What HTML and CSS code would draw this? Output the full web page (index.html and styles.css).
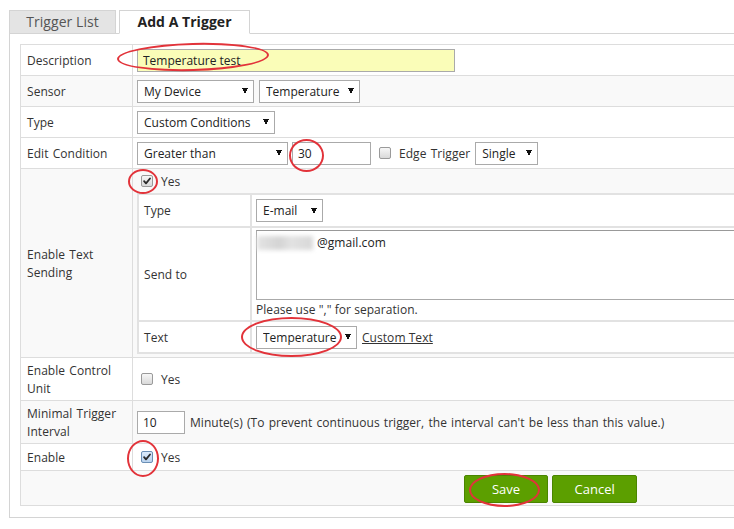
FILE: index.html
```html
<!DOCTYPE html>
<html lang="en">
<head>
    <meta charset="UTF-8">
    <meta name="viewport" content="width=device-width, initial-scale=1.0">
    <title>Add A Trigger</title>
    <link rel="stylesheet" href="styles.css">
</head>
<body>
<div class="page">
    <div class="tabs">
        <div class="tab">Trigger List</div>
        <div class="tab active">Add A Trigger</div>
    </div>

    <div class="panel">
        <table class="form">
            <tr class="r31">
                <td class="label">Description</td>
                <td class="value"><input class="desc" type="text" value="Temperature test"></td>
            </tr>
            <tr class="r31 alt">
                <td class="label">Sensor</td>
                <td class="value">
                    <div class="line">
                        <select class="w117"><option>My Device</option></select>
                        <select class="w101"><option>Temperature</option></select>
                    </div>
                </td>
            </tr>
            <tr class="r31">
                <td class="label">Type</td>
                <td class="value"><select class="w138"><option>Custom Conditions</option></select></td>
            </tr>
            <tr class="r31">
                <td class="label">Edit Condition</td>
                <td class="value">
                    <div class="line">
                        <select class="w151"><option>Greater than</option></select>
                        <input class="num w79" type="text" value="30">
                        <span class="cb edge"></span>
                        <span>Edge Trigger</span>
                        <select class="w63"><option>Single</option></select>
                    </div>
                </td>
            </tr>
            <tr class="alt">
                <td class="label">Enable Text<br>Sending</td>
                <td class="value nest">
                    <div class="line yes-line">
                        <span class="cb checked"><svg viewBox="0 0 12 12"><path d="M2.5 6.2 L4.8 8.8 L9.6 3" /></svg></span>
                        <span>Yes</span>
                    </div>
                    <table class="sub">
                        <tr class="s-type">
                            <td class="label">Type</td>
                            <td class="value"><select class="w67"><option>E-mail</option></select></td>
                        </tr>
                        <tr class="s-send">
                            <td class="label">Send to</td>
                            <td class="value send">
                                <div class="mailbox"><span class="blur"></span>@gmail.com</div>
                                <div class="note">Please use "," for separation.</div>
                            </td>
                        </tr>
                        <tr class="s-text">
                            <td class="label">Text</td>
                            <td class="value">
                                <div class="line">
                                    <select class="w101"><option>Temperature</option></select>
                                    <a class="link" href="#">Custom Text</a>
                                </div>
                            </td>
                        </tr>
                    </table>
                </td>
            </tr>
            <tr class="r43">
                <td class="label">Enable Control<br>Unit</td>
                <td class="value">
                    <div class="line"><span class="cb"></span><span>Yes</span></div>
                </td>
            </tr>
            <tr class="r43 alt">
                <td class="label">Minimal Trigger<br>Interval</td>
                <td class="value">
                    <div class="line">
                        <input class="num w48" type="text" value="10">
                        <span>Minute(s) (To prevent continuous trigger, the interval can't be less than this value.)</span>
                    </div>
                </td>
            </tr>
            <tr class="r27">
                <td class="label">Enable</td>
                <td class="value">
                    <div class="line">
                        <span class="cb checked focus"><svg viewBox="0 0 12 12"><path d="M2.5 6.2 L4.8 8.8 L9.6 3" /></svg></span>
                        <span>Yes</span>
                    </div>
                </td>
            </tr>
            <tr class="r35 alt">
                <td colspan="2" class="actions">
                    <button class="btn">Save</button>
                    <button class="btn">Cancel</button>
                </td>
            </tr>
        </table>
    </div>

    <!-- red annotation marks -->
    <div class="mark m1"></div>
    <div class="mark m2"></div>
    <div class="mark m3"></div>
    <div class="mark m4"></div>
    <div class="mark m5"></div>
    <div class="mark m6"></div>
</div>
</body>
</html>
```

FILE: styles.css
```css
* {
    margin: 0;
    padding: 0;
    box-sizing: border-box;
}

html, body {
    overflow: hidden;
}

body {
    font-family: "Open Sans", "Noto Sans", sans-serif;
    font-size: 12px;
    color: #333;
    background: #fff;
    word-spacing: 1px;
    letter-spacing: 0.05px;
}

.page {
    position: relative;
    width: 1100px;
    padding: 10px 0 0 9px;
}

/* tabs */
.tabs {
    display: flex;
    gap: 3px;
    margin-bottom: -1px;
}

.tab {
    height: 24px;
    line-height: 22px;
    font-size: 14px;
    color: #555;
    background: #e4e4e4;
    border: 1px solid #d4d4d4;
    width: 107px;
    text-align: center;
    word-spacing: 0;
}

.tab.active {
    width: 131px;
    background: #fff;
    color: #222;
    font-weight: bold;
    border-bottom-color: #fff;
    position: relative;
}

.panel {
    border: 1px solid #d4d4d4;
    padding: 10px 10px 11px 10px;
}

/* main table */
.form {
    width: 1062px;
    border-collapse: collapse;
    border: 1px solid #ddd;
}

.form td {
    border: 1px solid #ddd;
    vertical-align: middle;
}

.form .label {
    width: 112px;
    padding: 2px 6px 0;
    line-height: 18px;
}

.form .value {
    padding: 0 4px;
}

.alt td {
    background: #f9f9f9;
}

.r31 { height: 31px; }
.r43 { height: 43px; }
.r27 { height: 27px; }
.r35 { height: 35px; }

.line {
    display: flex;
    align-items: center;
    gap: 5px;
}

/* controls */
select {
    appearance: none;
    -webkit-appearance: none;
    height: 23px;
    font-family: inherit;
    font-size: 12px;
    color: #222;
    border: 1px solid #aaa;
    padding: 0 16px 0 6px;
    background-color: #fff;
    background-image:
        linear-gradient(to bottom left, #111 50%, transparent 50%),
        linear-gradient(to bottom right, #111 50%, transparent 50%);
    background-size: 3px 6px, 3px 6px;
    background-position: calc(100% - 8px) 50%, calc(100% - 5px) 50%;
    background-repeat: no-repeat;
    border-radius: 0;
}

.w117 { width: 117px; }
.w101 { width: 101px; }
.w138 { width: 138px; }
.w151 { width: 151px; }
.w63 { width: 63px; }
.w67 { width: 67px; }

input[type="text"] {
    font-family: inherit;
    font-size: 12px;
    color: #222;
    height: 23px;
    padding: 0 5px;
    border: 1px solid #aaa;
    outline: none;
}

.desc {
    width: 318px;
    background: #fafdb8;
    border-color: #8e8e8e #ededed #ededed #8e8e8e;
    border-top-width: 2px;
    padding-left: 4px;
}

.w79 { width: 79px; margin-left: -1px; }
.w48 { width: 48px; }

.num {
    padding-left: 4px;
}

.cb {
    display: inline-block;
    width: 12px;
    height: 12px;
    margin-left: 4px;
    border: 1px solid #9a9a9a;
    border-radius: 2px;
    background: linear-gradient(#f7f7f7, #d9d9d9);
    flex: none;
}

.cb + span {
    margin-left: 3px;
}

.cb.edge {
    margin-left: 3px;
}

.cb svg {
    display: block;
    width: 10px;
    height: 10px;
}

.cb path {
    fill: none;
    stroke: #2a2a2a;
    stroke-width: 2.2;
    stroke-linecap: round;
    stroke-linejoin: round;
}

.cb.focus {
    border-color: #6b8fb5;
    background: linear-gradient(#dcebfb, #b9d3ef);
}

/* nested table for text sending */
.nest {
    padding: 0 0 3px 4px !important;
}

.yes-line {
    height: 24px;
}

.sub {
    width: 700px;
    border-collapse: collapse;
    border: 2px solid #e2e2e2;
    background: #fff;
    word-spacing: 0;
}

.sub td {
    border: 2px solid #e2e2e2;
    background: #fff;
}

.sub .label {
    width: 113px;
    padding: 1px 5px 0;
}

.sub .value {
    padding: 0 4px;
}

.s-type { height: 33px; }
.s-text { height: 32px; }

.send {
    padding-top: 2px !important;
}

.mailbox {
    width: 560px;
    height: 70px;
    border: 1px solid #aaa;
    border-top-color: #999;
    font-size: 12px;
    color: #222;
    padding-top: 3px;
    display: flex;
    align-items: flex-start;
}

.blur {
    display: inline-block;
    width: 56px;
    height: 14px;
    margin: 2px 4px 0 0;
    background: linear-gradient(90deg, #e4e4e4, #d4d4d4 40%, #e2e2e2 60%, #d8d8d8);
    filter: blur(2px);
}

.note {
    height: 20px;
    line-height: 20px;
}

.link {
    color: #333;
    text-decoration: underline;
}

/* buttons */
.actions {
    text-align: left;
    padding: 1px 0 0 443px;
    word-spacing: 0;
}

.btn {
    width: 84px;
    height: 28px;
    margin-right: 1px;
    font-family: inherit;
    font-size: 13px;
    color: #fff;
    background: #5c9f00;
    border: 1px solid #4a8500;
    border-radius: 2px;
    cursor: pointer;
}

.btn + .btn {
    width: 85px;
    margin-left: 0;
}

/* annotation ellipses */
.mark {
    position: absolute;
    border: 2px solid #e2333a;
    border-radius: 50%;
    pointer-events: none;
}

.m1 { left: 117px; top: 43px; width: 152px; height: 28px; transform: rotate(-1.5deg); }
.m2 { left: 289px; top: 139px; width: 35px; height: 33px; }
.m3 { left: 128px; top: 169px; width: 30px; height: 25px; }
.m4 { left: 241px; top: 317px; width: 101px; height: 40px; }
.m5 { left: 127px; top: 440px; width: 32px; height: 37px; }
.m6 { left: 469px; top: 473px; width: 71px; height: 34px; }
```
